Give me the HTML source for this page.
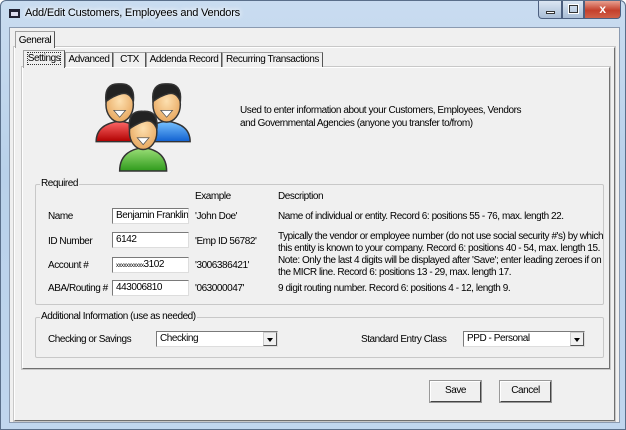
<!DOCTYPE html>
<html><head><style>
*{margin:0;padding:0;box-sizing:border-box}
body{width:626px;height:430px;overflow:hidden;font-family:"Liberation Sans",sans-serif;font-size:10px;letter-spacing:-0.45px;color:#000;background:#fff}
.win{position:absolute;left:0;top:0;width:626px;height:430px;background:linear-gradient(180deg,#c9dcf0 0%,#b9d1ea 40%,#c0d6ee 100%);border:1px solid #5a6f8a;border-radius:6px 6px 0 0}
.title{position:absolute;left:24px;top:6px;font-size:11px;letter-spacing:-0.2px;color:#000;text-shadow:0 0 6px #fff,0 0 6px #fff}
.ticon{position:absolute;left:8px;top:8px;width:11px;height:9px;border:2px solid #223;border-top-width:3px;background:#dde}
.tb{position:absolute;top:0;height:18px;border:1px solid #4d6080;border-top:none}
.client{position:absolute;left:8px;top:26px;width:611px;height:396px;background:#f0f0f0;border:1px solid #8a9ab0}
.abs{position:absolute}
.tab{position:absolute;height:17px;background:#f0f0f0;border:1px solid #a0a0a0;border-bottom:none;padding:2px 0;text-align:center;white-space:nowrap}
.panel{position:absolute;border:1px solid #a0a0a0;border-right-color:#707070;border-bottom-color:#707070;border-top-color:#fff;border-left-color:#fff;outline:1px solid #c8c8c8}
.grp{position:absolute;border:1px solid #c8c8c8;border-radius:2px}
.grp .lg{position:absolute;left:4px;top:-7px;background:#f0f0f0;padding:0 1px}
.inp{position:absolute;height:16px;background:#fff;border:1px solid #7a7a7a;border-right-color:#ddd;border-bottom-color:#ddd;padding:1px 3px;font-size:10px;white-space:nowrap;overflow:hidden}
.cmb{position:absolute;height:16px;background:#fff;border:1px solid #7a7a7a;border-right-color:#ddd;border-bottom-color:#ddd;padding:1px 3px}
.cmb .ar{position:absolute;right:0;top:0;width:14px;height:14px;background:#f0f0f0;border:1px solid #ccc;border-right-color:#555;border-bottom-color:#555}
.cmb .ar:after{content:"";position:absolute;left:3px;top:5px;border:3px solid transparent;border-top:4px solid #000}
.btn{position:absolute;width:51px;height:21px;border:1px solid #fff;border-right-color:#444;border-bottom-color:#444;outline:1px solid #999;background:#f0f0f0;text-align:center;line-height:18px}
.t{position:absolute;white-space:nowrap}
</style></head><body>
<div class="win">
<div class="ticon"></div>
<div class="title">Add/Edit Customers, Employees and Vendors</div>
<div class="tb" style="left:537px;width:24px;background:linear-gradient(#dbe6f3,#a9bdd6);border-radius:0 0 0 4px"><div class="abs" style="left:7px;top:10px;width:9px;height:3px;background:#fff;border:1px solid #333"></div></div>
<div class="tb" style="left:561px;width:22px;background:linear-gradient(#dbe6f3,#a9bdd6)"><div class="abs" style="left:6px;top:4px;width:9px;height:8px;border:1px solid #333;outline:1px solid #fff"></div></div>
<div class="tb" style="left:583px;width:37px;background:linear-gradient(#e8a090,#c4402c 55%,#d06048);border-radius:0 0 4px 0;color:#fff;font-weight:bold;font-size:12px;text-align:center;line-height:16px">x</div>
<div class="client"></div>
</div>
<div class="panel" style="left:14px;top:47px;width:601px;height:374px"></div>
<div class="tab" style="left:15px;top:31px;width:40px;height:17px;border-right-color:#555;padding:3px 0">General</div>
<div class="panel" style="left:22px;top:67px;width:588px;height:302px"></div>
<div class="tab" style="left:23px;top:50px;width:42px;height:18px;border-right-color:#555"><span style="outline:1px dotted #333">Settings</span></div>
<div class="tab" style="left:65px;top:52px;width:48px;height:15px;padding:1px 0;border-right-color:#555">Advanced</div>
<div class="tab" style="left:113px;top:52px;width:33px;height:15px;padding:1px 0;border-right-color:#555">CTX</div>
<div class="tab" style="left:146px;top:52px;width:76px;height:15px;padding:1px 0;border-right-color:#555">Addenda Record</div>
<div class="tab" style="left:222px;top:52px;width:101px;height:15px;padding:1px 0;border-right-color:#555">Recurring Transactions</div>
<svg class="abs" style="left:95px;top:80px" width="110" height="93" viewBox="0 0 110 95">
<defs>
<radialGradient id="sk" cx=".5" cy=".4" r=".6"><stop offset="0" stop-color="#fde0b0"/><stop offset="1" stop-color="#e8a860"/></radialGradient>
<linearGradient id="r" x1="0" y1="0" x2="0" y2="1"><stop offset="0" stop-color="#ff6a6a"/><stop offset="1" stop-color="#b00000"/></linearGradient>
<linearGradient id="b" x1="0" y1="0" x2="0" y2="1"><stop offset="0" stop-color="#7ac4ff"/><stop offset="1" stop-color="#1060d0"/></linearGradient>
<linearGradient id="g" x1="0" y1="0" x2="0" y2="1"><stop offset="0" stop-color="#9ee07a"/><stop offset="1" stop-color="#2f9a1c"/></linearGradient>
</defs>
<g stroke="#333" stroke-width="1.5">
<path d="M0 63 Q0 45 24 42 Q48 45 48 63 Z" fill="url(#r)"/>
<ellipse cx="24" cy="25" rx="14" ry="18" fill="url(#sk)"/>
<path d="M10 22 Q8 3 24 4 Q40 3 38 22 Q34 12 26 14 Q18 16 10 22Z" fill="#222"/>
<path d="M48 63 Q48 45 72 42 Q96 45 96 63 Z" fill="url(#b)"/>
<ellipse cx="72" cy="25" rx="14" ry="18" fill="url(#sk)"/>
<path d="M58 22 Q56 3 72 4 Q88 3 86 22 Q82 12 74 14 Q66 16 58 22Z" fill="#222"/>
<path d="M24 93 Q24 72 48 69 Q72 72 72 93 Z" fill="url(#g)"/>
<ellipse cx="48" cy="53" rx="14" ry="18" fill="url(#sk)"/>
<path d="M34 50 Q32 31 48 32 Q64 31 62 50 Q58 40 50 42 Q42 44 34 50Z" fill="#222"/>
</g>
<path d="M18 31 L30 31 L24 38Z M66 31 L78 31 L72 38Z M42 59 L54 59 L48 66Z" fill="#fff" stroke="#555" stroke-width=".8"/>
</svg>
<div class="t" style="left:240px;top:104px;line-height:13px">Used to enter information about your Customers, Employees, Vendors<br>and Governmental Agencies (anyone you transfer to/from)</div>
<div class="grp" style="left:35px;top:184px;width:569px;height:121px"><span class="lg">Required</span></div>
<div class="t" style="left:195px;top:191px">Example</div>
<div class="t" style="left:278px;top:191px">Description</div>
<div class="t" style="left:48px;top:211px">Name</div>
<div class="inp" style="left:112px;top:208px;width:77px">Benjamin Franklin</div>
<div class="t" style="left:195px;top:211px">'John Doe'</div>
<div class="t" style="left:278px;top:211px">Name of individual or entity. Record 6: positions 55 - 76, max. length 22.</div>
<div class="t" style="left:48px;top:236px">ID Number</div>
<div class="inp" style="left:112px;top:232px;width:77px">6142</div>
<div class="t" style="left:195px;top:236px">'Emp ID 56782'</div>
<div class="t" style="left:278px;top:231px;line-height:12px">Typically the vendor or employee number (do not use social security #'s) by which<br>this entity is known to your company. Record 6: positions 40 - 54, max. length 15.</div>
<div class="t" style="left:48px;top:260px">Account #</div>
<div class="inp" style="left:112px;top:257px;width:77px"><span style="font-size:6px;letter-spacing:-.5px">xxxxxxxxxxx</span>3102</div>
<div class="t" style="left:195px;top:260px">'3006386421'</div>
<div class="t" style="left:278px;top:255px;line-height:12px">Note: Only the last 4 digits will be displayed after 'Save'; enter leading zeroes if on<br>the MICR line. Record 6: positions 13 - 29, max. length 17.</div>
<div class="t" style="left:48px;top:283px">ABA/Routing #</div>
<div class="inp" style="left:112px;top:280px;width:77px">443006810</div>
<div class="t" style="left:195px;top:283px">'063000047'</div>
<div class="t" style="left:278px;top:283px">9 digit routing number. Record 6: positions 4 - 12, length 9.</div>
<div class="grp" style="left:35px;top:317px;width:569px;height:41px"><span class="lg">Additional Information (use as needed)</span></div>
<div class="t" style="left:48px;top:334px">Checking or Savings</div>
<div class="cmb" style="left:156px;top:331px;width:122px">Checking<div class="ar"></div></div>
<div class="t" style="left:361px;top:334px">Standard Entry Class</div>
<div class="cmb" style="left:463px;top:331px;width:122px">PPD - Personal<div class="ar"></div></div>
<div class="btn" style="left:430px;top:381px">Save</div>
<div class="btn" style="left:500px;top:381px">Cancel</div>
</body></html>
